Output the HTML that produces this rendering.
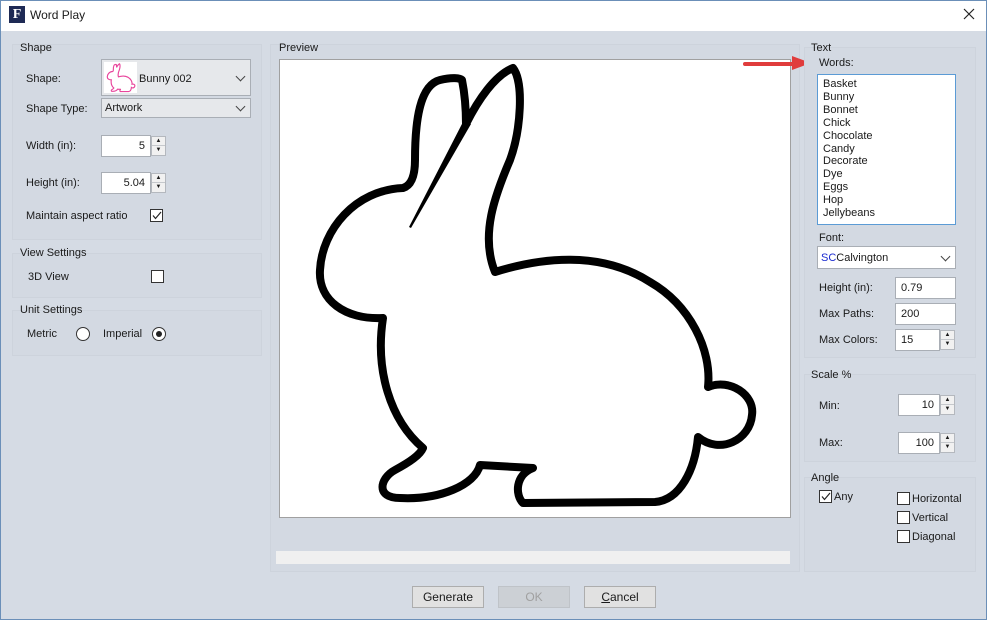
<!DOCTYPE html>
<html><head><meta charset="utf-8"><style>
*{box-sizing:border-box;margin:0;padding:0}
body{width:987px;height:620px;overflow:hidden;background:#d5dbe4;font-family:"Liberation Sans",sans-serif;font-size:11px;color:#1a1a1a;position:relative}
.a{position:absolute}
.win{position:absolute;left:0;top:0;width:987px;height:620px;border:1px solid #6b8fb8;border-top:none}
.title{position:absolute;left:0;top:0;width:987px;height:31px;background:#fff;border-left:1px solid #6b8fb8;border-right:1px solid #6b8fb8;border-top:1px solid #6b8fb8}
.grp{position:absolute;border:1px solid #cdd3dc;background:#d3d9e2}
.lbl{position:absolute;white-space:nowrap}
.inp{position:absolute;background:#fff;border:1px solid #a9aeb5}
.spin{position:absolute;width:15px;border:1px solid #b4b8be;background:#f1f1f1}
.spin div{height:50%;border-bottom:1px solid #c5c8cc;font-size:6px;text-align:center;line-height:8px}
.cb{position:absolute;width:13px;height:13px;border:1px solid #333;background:#fff}
.btn{position:absolute;height:22px;border:1px solid #adadad;background:#e1e1e1;text-align:center;line-height:20px;font-size:12px}
.combo{position:absolute;border:1px solid #a9aeb5;background:#e6e8eb}
.chev{position:absolute;right:6px;width:7px;height:7px;border-right:1px solid #444;border-bottom:1px solid #444;transform:rotate(45deg)}
</style></head><body>
<div class="win"></div>
<div class="title"></div>
<div class="a" style="left:9px;top:6px;width:16px;height:17px;background:#1e2a55;color:#fff;font-family:'Liberation Serif',serif;font-weight:bold;font-size:14px;text-align:center;line-height:17px">F</div>
<div class="lbl" style="left:30px;top:8px;font-size:12px">Word Play</div>
<svg class="a" style="left:963px;top:8px" width="12" height="12"><path d="M1 1L11 11M11 1L1 11" stroke="#222" stroke-width="1.2"/></svg>

<div class="grp" style="left:12px;top:44px;width:250px;height:196px"></div>
<div class="lbl" style="left:20px;top:42px">Shape</div>
<div class="lbl" style="left:26px;top:73px">Shape:</div>
<div class="combo" style="left:101px;top:59px;width:150px;height:37px"><div class="a" style="left:2px;top:2px;width:33px;height:31px;background:#fff"></div>
<svg class="a" style="left:4px;top:3px" width="30" height="30" viewBox="300 60 470 460"><path d="M513,68 C524,82 521,130 510,160 C495,195 480,235 495,272 C540,258 600,250 650,282 C690,305 712,350 708,387 C730,378 755,395 752,415 C750,440 720,455 698,437 C695,470 680,500 655,502 L523,503 C515,495 515,475 533,468 L480,465 C475,485 440,500 400,498 C375,498 380,478 395,470 C410,462 420,455 423,448 C390,420 375,370 383,318 C345,320 318,300 320,270 C322,230 355,190 403,188 C413,185 415,172 415,160 C415,120 420,85 440,80 C452,77 460,78 462,80 C465,95 466,112 466,124 C478,100 495,75 513,68 Z" fill="none" stroke="#e8459c" stroke-width="18"/></svg>
<div class="lbl" style="left:37px;top:13px;font-size:11px">Bunny 002</div><div class="chev" style="top:13px"></div></div>
<div class="lbl" style="left:26px;top:103px">Shape Type:</div>
<div class="combo" style="left:101px;top:98px;width:150px;height:20px"><div class="lbl" style="left:3px;top:3px">Artwork</div><div class="chev" style="top:4px"></div></div>
<div class="lbl" style="left:26px;top:140px">Width (in):</div>
<div class="inp" style="left:101px;top:135px;width:50px;height:22px"><div class="lbl" style="right:5px;top:4px">5</div></div>
<div class="spin" style="left:151px;top:136px;height:20px"><div>▲</div><div style="border:none">▼</div></div>
<div class="lbl" style="left:26px;top:177px">Height (in):</div>
<div class="inp" style="left:101px;top:172px;width:50px;height:22px"><div class="lbl" style="right:5px;top:4px">5.04</div></div>
<div class="spin" style="left:151px;top:173px;height:20px"><div>▲</div><div style="border:none">▼</div></div>
<div class="lbl" style="left:26px;top:210px">Maintain aspect ratio</div>
<div class="cb" style="left:150px;top:209px"><svg width="11" height="11" class="a" style="left:0;top:0"><path d="M2 5.5L4.5 8.5L10 2" fill="none" stroke="#222" stroke-width="1.2"/></svg></div>

<div class="grp" style="left:12px;top:253px;width:250px;height:45px"></div>
<div class="lbl" style="left:20px;top:247px">View Settings</div>
<div class="lbl" style="left:28px;top:271px">3D View</div>
<div class="cb" style="left:151px;top:270px"></div>
<div class="grp" style="left:12px;top:310px;width:250px;height:46px"></div>
<div class="lbl" style="left:20px;top:304px">Unit Settings</div>
<div class="lbl" style="left:27px;top:328px">Metric</div>
<div class="a" style="left:76px;top:327px;width:14px;height:14px;border:1px solid #333;border-radius:50%;background:#fff"></div>
<div class="lbl" style="left:103px;top:328px">Imperial</div>
<div class="a" style="left:152px;top:327px;width:14px;height:14px;border:1px solid #333;border-radius:50%;background:#fff"><div class="a" style="left:3px;top:3px;width:6px;height:6px;border-radius:50%;background:#222"></div></div>

<div class="grp" style="left:270px;top:44px;width:530px;height:528px"></div>
<div class="lbl" style="left:279px;top:42px">Preview</div>
<div class="a" style="left:279px;top:59px;width:512px;height:459px;background:#fff;border:1px solid #a0a0a0"></div>
<svg class="a" style="left:0;top:0" width="987" height="620">
<path d="M513,68 C524,82 521,130 510,160 C495,195 480,235 495,272 C540,258 600,250 650,282 C690,305 712,350 708,387 C730,378 755,395 752,415 C750,440 720,455 698,437 C695,470 680,500 655,502 L523,503 C515,495 515,475 533,468 L480,465 C475,485 440,500 400,498 C375,498 380,478 395,470 C410,462 420,455 423,448 C390,420 375,370 383,318 C345,320 318,300 320,270 C322,230 355,190 403,188 C413,185 415,172 415,160 C415,120 420,85 440,80 C452,77 460,78 462,80 C465,95 466,112 466,124 C478,100 495,75 513,68 Z" fill="none" stroke="#000" stroke-width="8" stroke-linejoin="round"/>
<polygon points="464,120 471,124 411,228 409,227" fill="#000"/>
<path d="M745,64 L795,64" stroke="#e03c3c" stroke-width="4" stroke-linecap="round"/>
<polygon points="792,56 811,63 792,70" fill="#e03c3c"/>
</svg>
<div class="a" style="left:276px;top:551px;width:514px;height:13px;background:#f0f0f0"></div>

<div class="grp" style="left:804px;top:47px;width:172px;height:311px"></div>
<div class="lbl" style="left:811px;top:42px">Text</div>
<div class="lbl" style="left:819px;top:57px">Words:</div>
<div class="a" style="left:817px;top:74px;width:139px;height:151px;background:#fff;border:1px solid #5b9bd5"></div>
<div class="lbl" style="left:823px;top:78px;line-height:12.9px">Basket<br>Bunny<br>Bonnet<br>Chick<br>Chocolate<br>Candy<br>Decorate<br>Dye<br>Eggs<br>Hop<br>Jellybeans</div>
<div class="lbl" style="left:819px;top:232px">Font:</div>
<div class="a" style="left:817px;top:246px;width:139px;height:23px;background:#fff;border:1px solid #a9aeb5"><div class="lbl" style="left:3px;top:5px"><span style="color:#1a2ad0">SC</span>Calvington</div><div class="chev" style="top:6px"></div></div>
<div class="lbl" style="left:819px;top:282px">Height (in):</div>
<div class="inp" style="left:895px;top:277px;width:61px;height:22px"><div class="lbl" style="left:5px;top:4px">0.79</div></div>
<div class="lbl" style="left:819px;top:308px">Max Paths:</div>
<div class="inp" style="left:895px;top:303px;width:61px;height:22px"><div class="lbl" style="left:5px;top:4px">200</div></div>
<div class="lbl" style="left:819px;top:334px">Max Colors:</div>
<div class="inp" style="left:895px;top:329px;width:45px;height:22px"><div class="lbl" style="left:5px;top:4px">15</div></div>
<div class="spin" style="left:940px;top:330px;height:20px"><div>▲</div><div style="border:none">▼</div></div>

<div class="grp" style="left:804px;top:374px;width:172px;height:88px"></div>
<div class="lbl" style="left:811px;top:369px">Scale %</div>
<div class="lbl" style="left:819px;top:400px">Min:</div>
<div class="inp" style="left:898px;top:394px;width:42px;height:22px"><div class="lbl" style="right:5px;top:4px">10</div></div>
<div class="spin" style="left:940px;top:395px;height:20px"><div>▲</div><div style="border:none">▼</div></div>
<div class="lbl" style="left:819px;top:437px">Max:</div>
<div class="inp" style="left:898px;top:432px;width:42px;height:22px"><div class="lbl" style="right:5px;top:4px">100</div></div>
<div class="spin" style="left:940px;top:433px;height:20px"><div>▲</div><div style="border:none">▼</div></div>

<div class="grp" style="left:804px;top:477px;width:172px;height:95px"></div>
<div class="lbl" style="left:811px;top:472px">Angle</div>
<div class="cb" style="left:819px;top:490px"><svg width="11" height="11" class="a" style="left:0;top:0"><path d="M2 5.5L4.5 8.5L10 2" fill="none" stroke="#222" stroke-width="1.2"/></svg></div>
<div class="lbl" style="left:834px;top:491px">Any</div>
<div class="cb" style="left:897px;top:492px"></div><div class="lbl" style="left:912px;top:493px">Horizontal</div>
<div class="cb" style="left:897px;top:511px"></div><div class="lbl" style="left:912px;top:512px">Vertical</div>
<div class="cb" style="left:897px;top:530px"></div><div class="lbl" style="left:912px;top:531px">Diagonal</div>

<div class="btn" style="left:412px;top:586px;width:72px">Generate</div>
<div class="btn" style="left:498px;top:586px;width:72px;color:#a0a0a0;background:#ccd0d5;border-color:#bfc3c8">OK</div>
<div class="btn" style="left:584px;top:586px;width:72px"><u>C</u>ancel</div>
</body></html>
